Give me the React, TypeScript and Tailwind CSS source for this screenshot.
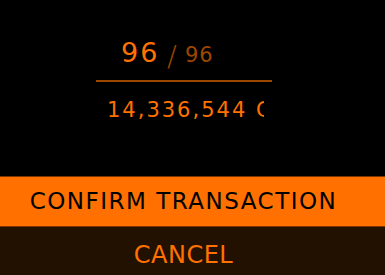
import React from 'react';

const font = { fontFamily: '"DejaVu Sans", "Liberation Sans", sans-serif' };

const App: React.FC = () => {
  return (
    <div className="w-[385px] h-[275px] bg-black flex flex-col overflow-hidden" style={font}>
      {/* quantity block */}
      <div className="h-[176px] pl-[96px] pt-[34px]">
        <div className="w-[176px] flex flex-col">
          <div className="flex items-end h-[32px] pl-[25px]">
            <span className="w-[46px] text-[27px] leading-none text-[#ff7100] tracking-[2px]">96</span>
            <span className="w-[18px] text-[29px] leading-none text-[#9c4600] font-light translate-y-[5px]">/</span>
            <span className="text-[21px] leading-none text-[#9c4600] tracking-[1px]">96</span>
          </div>
          <div className="mt-[14px] h-[2px] bg-[#9c4600]" />
          <div className="mt-[18px] w-[168px] overflow-hidden whitespace-nowrap pl-[11px]">
            <span className="text-[21px] leading-none text-[#ff7100] tracking-[2px]">14,336,544 CR</span>
          </div>
        </div>
      </div>

      {/* actions */}
      <button className="h-[51px] bg-[#ff7000] border-y border-y-[#7a3500] flex items-center justify-center pr-[18px]">
        <span className="text-[23px] text-black tracking-[1.5px]">CONFIRM TRANSACTION</span>
      </button>
      <button className="flex-1 bg-[#221100] flex items-center justify-center pr-[18px] pt-[7px]">
        <span className="text-[24px] text-[#ff7100] tracking-[0.5px]">CANCEL</span>
      </button>
    </div>
  );
};

export default App;
